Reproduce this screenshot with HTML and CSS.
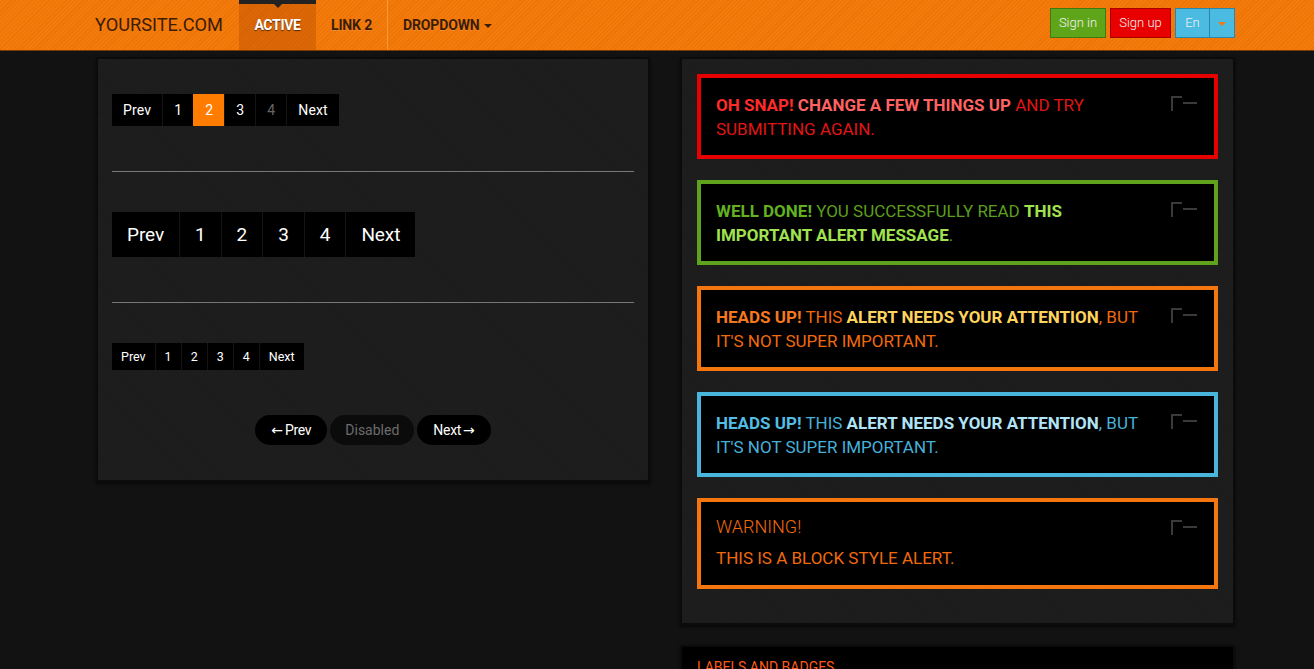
FILE: index.html
```html
<!DOCTYPE html>
<html>
<head>
<meta charset="utf-8">
<link rel="stylesheet" href="styles.css">
</head>
<body>
<header class="navbar">
  <div class="nav-inner">
    <a class="brand">YOURSITE.COM</a>
    <ul class="nav">
      <li class="active"><a>ACTIVE</a></li>
      <li><a>LINK 2</a></li>
      <li class="sep"><a>DROPDOWN <span class="caret"></span></a></li>
    </ul>
    <div class="nav-right">
      <a class="btn btn-green">Sign in</a>
      <a class="btn btn-red">Sign up</a>
      <div class="split">
        <a class="btn btn-blue">En</a>
        <a class="btn btn-blue btn-caret"><span class="caret caret-orange"></span></a>
      </div>
    </div>
  </div>
</header>

<main class="wrap">
  <section class="col">
    <div class="panel">
      <ul class="pagination">
        <li>Prev</li><li>1</li><li class="on">2</li><li>3</li><li class="dis">4</li><li>Next</li>
      </ul>
      <hr>
      <ul class="pagination large">
        <li>Prev</li><li>1</li><li>2</li><li>3</li><li>4</li><li>Next</li>
      </ul>
      <hr>
      <ul class="pagination small">
        <li>Prev</li><li>1</li><li>2</li><li>3</li><li>4</li><li>Next</li>
      </ul>
      <ul class="pager">
        <li><span class="arr">&larr;</span>Prev</li>
        <li class="dis">Disabled</li>
        <li>Next<span class="arr arr-r">&rarr;</span></li>
      </ul>
    </div>
  </section>

  <section class="col">
    <div class="panel panel-right">
      <div class="alert red">
        <span class="close"></span>
        <p><b class="k">OH SNAP!</b> <b class="hl">CHANGE A FEW THINGS UP</b> AND TRY SUBMITTING AGAIN.</p>
      </div>
      <div class="alert green">
        <span class="close"></span>
        <p><b class="k">WELL DONE!</b> YOU SUCCESSFULLY READ <b class="hl">THIS IMPORTANT ALERT MESSAGE</b>.</p>
      </div>
      <div class="alert orange">
        <span class="close"></span>
        <p><b class="k">HEADS UP!</b> THIS <b class="hl">ALERT NEEDS YOUR ATTENTION</b>, BUT IT'S NOT SUPER IMPORTANT.</p>
      </div>
      <div class="alert blue">
        <span class="close"></span>
        <p><b class="k">HEADS UP!</b> THIS <b class="hl">ALERT NEEDS YOUR ATTENTION</b>, BUT IT'S NOT SUPER IMPORTANT.</p>
      </div>
      <div class="alert orange block">
        <span class="close"></span>
        <h4>WARNING!</h4>
        <p>THIS IS A BLOCK STYLE ALERT.</p>
      </div>
    </div>
    <div class="panel panel-dark">
      <h3 class="title">LABELS AND BADGES</h3>
    </div>
  </section>
</main>
</body>
</html>
```
FILE: styles.css
```css
* { box-sizing: border-box; }
html, body { margin: 0; padding: 0; }
body {
  background: #121212;
  font-family: Roboto, "Liberation Sans", sans-serif;
  color: #fff;
  overflow: hidden;
  height: 669px;
}
ul { list-style: none; margin: 0; padding: 0; }
a { text-decoration: none; color: inherit; cursor: pointer; }

.navbar {
  height: 51px;
  background: repeating-linear-gradient(-45deg, #f47b0b 0 2px, #ea7406 2px 3px);
  border-bottom: 1px solid #7a3a00;
}
.nav-inner {
  width: 1140px;
  margin-left: 95px;
  display: flex;
  align-items: stretch;
  height: 50px;
}
.brand {
  font-size: 18.2px;
  color: #3b1c05;
  line-height: 50px;
  width: 144px;
  white-space: nowrap;
}
.nav { display: flex; }
.nav li a {
  display: block;
  line-height: 50px;
  padding: 0 15px;
  font-size: 14px;
  font-weight: 700;
  color: #3b1c05;
  letter-spacing: -0.15px;
  white-space: nowrap;
  text-shadow: 0 1px 0 rgba(255,255,255,0.15);
}
.nav li.active { position: relative; }
.nav li.active a {
  color: #fff;
  width: 77px;
  text-align: center;
  padding: 0;
  letter-spacing: -0.3px;
  background: rgba(190, 80, 0, 0.45);
  text-shadow: 0 1px 1px rgba(0,0,0,0.6);
}
.nav li.active::before {
  content: "";
  position: absolute;
  left: 0; right: 0; top: 0;
  height: 4px;
  background: #222;
}
.nav li.active::after {
  content: "";
  position: absolute;
  left: 50%; top: 3px;
  margin-left: -5px;
  border-left: 5px solid transparent;
  border-right: 5px solid transparent;
  border-top: 5px solid #222;
}
.nav li.sep { border-left: 1px solid rgba(255, 170, 90, 0.6); }
.caret {
  display: inline-block;
  width: 0; height: 0;
  border-left: 4px solid transparent;
  border-right: 4px solid transparent;
  border-top: 4px solid #3b1c05;
  vertical-align: middle;
  margin-left: 1px;
}
.nav-right {
  margin-left: auto;
  display: flex;
  gap: 4px;
  align-items: flex-start;
  padding-top: 8px;
}
.btn {
  display: block;
  height: 30px;
  line-height: 28px;
  font-size: 13px;
  font-weight: 300;
  color: #f4f4f4;
  padding: 0;
  text-align: center;
  white-space: nowrap;
  border: 1px solid;
}
.btn-green { background: #5fa51a; border-color: #3e7a10; width: 56px; }
.btn-red { background: #e80000; border-color: #a80000; width: 61px; }
.split { display: flex; }
.btn-blue { background: #4bbbe1; border-color: #2a86a8; width: 35px; }
.btn-caret { width: 26px; border-left: 1px solid #2a86a8; margin-left: -1px; }
.caret-orange { border-top-color: #f07a10; margin: 0; }

.wrap {
  width: 1140px;
  margin-left: 96px;
  display: flex;
  gap: 30px;
  align-items: flex-start;
  padding-top: 6px;
}
.col { width: 555px; flex: none; }
.col:first-child { width: 554px; }

.panel {
  background: #1c1c1c repeating-linear-gradient(45deg, rgba(255,255,255,0.012) 0 1px, transparent 1px 3px);
  border: 2px solid #0b0b0b;
  box-shadow: 0 2px 3px rgba(0,0,0,0.6);
  padding: 35px 14px 35px;
}

.pagination { display: flex; }
.pagination li {
  background: #000;
  color: #fff;
  font-size: 14px;
  height: 32px;
  line-height: 32px;
  padding: 0 11px;
  letter-spacing: 0.15px;
  border-left: 1px solid #141414;
}
.pagination li:first-child { border-left: 0; }
.pagination li.on { background: #ff7c00; border-left-color: #ff7c00; }
.pagination li.dis { color: #666; }
.pagination.large li {
  height: 45px;
  line-height: 45px;
  font-size: 19px;
  padding: 0 15px;
  letter-spacing: -0.1px;
}
.pagination.small li {
  height: 27px;
  line-height: 27px;
  font-size: 12.5px;
  padding: 0 9px;
  letter-spacing: 0;
}
hr {
  border: 0;
  border-top: 1px solid #777;
  margin: 45px 0 40px;
}
.pagination.small { margin-bottom: 45px; }

.pager {
  display: flex;
  justify-content: center;
  gap: 3px;
}
.pager li {
  background: #000;
  height: 30px;
  line-height: 30px;
  border-radius: 15px;
  padding: 0 16px;
  font-size: 14px;
  letter-spacing: -0.3px;
  white-space: nowrap;
}
.pager .arr {
  display: inline-block;
  font-family: "DejaVu Sans", sans-serif;
  font-size: 14px;
  letter-spacing: 0;
  margin-right: 2px;
}
.pager .arr-r { margin: 0 0 0 2px; }
.pager li.dis { color: #6b6b6b; background: #0b0b0b; letter-spacing: 0; padding: 0 15px; }

.panel-right { padding: 15px 15px 34px; }
.alert {
  position: relative;
  background: #000;
  border: 4px solid;
  padding: 15px 60px 14px 15px;
  margin-bottom: 21px;
}
.alert:last-child { margin-bottom: 0; }
.alert p, .alert h4 {
  margin: 0;
  font-size: 17px;
  line-height: 24px;
}
.alert b { font-weight: 700; }
.close {
  position: absolute;
  right: 17px;
  top: 18px;
  width: 26px;
  height: 14px;
}
.close::before {
  content: "";
  position: absolute;
  left: 0; top: 0;
  width: 9px; height: 13px;
  border-left: 2px solid #3a3a3a;
  border-top: 2px solid #3a3a3a;
}
.close::after {
  content: "";
  position: absolute;
  left: 12px; top: 6px;
  width: 14px; height: 2px;
  background: #3a3a3a;
}
.red { border-color: #e60000; color: #e01515; }
.red .k { color: #ff2a2a; }
.red .hl { color: #ff6262; }
.green { border-color: #5fa31d; color: #5c9f1c; }
.green .k { color: #63b020; }
.green .hl { color: #a0e24f; }
.orange { border-color: #f5760f; color: #f06a0c; }
.orange .k { color: #f5781f; }
.orange .hl { color: #ffd45e; }
.blue { border-color: #4ab5dc; color: #46b1da; }
.blue .k { color: #53bde4; }
.blue .hl { color: #b2e4f7; }
.alert.block { padding-top: 13px; padding-bottom: 15px; }
.alert.block h4 { font-weight: 300; font-size: 18px; margin-bottom: 7px; }
.alert.block p { font-size: 17px; }

.panel-dark {
  margin-top: 20px;
  background: #000;
  padding: 12px 15px 20px;
}
.title {
  margin: 0;
  font-size: 14px;
  font-weight: 400;
  color: #ff5a1a;
}
```
